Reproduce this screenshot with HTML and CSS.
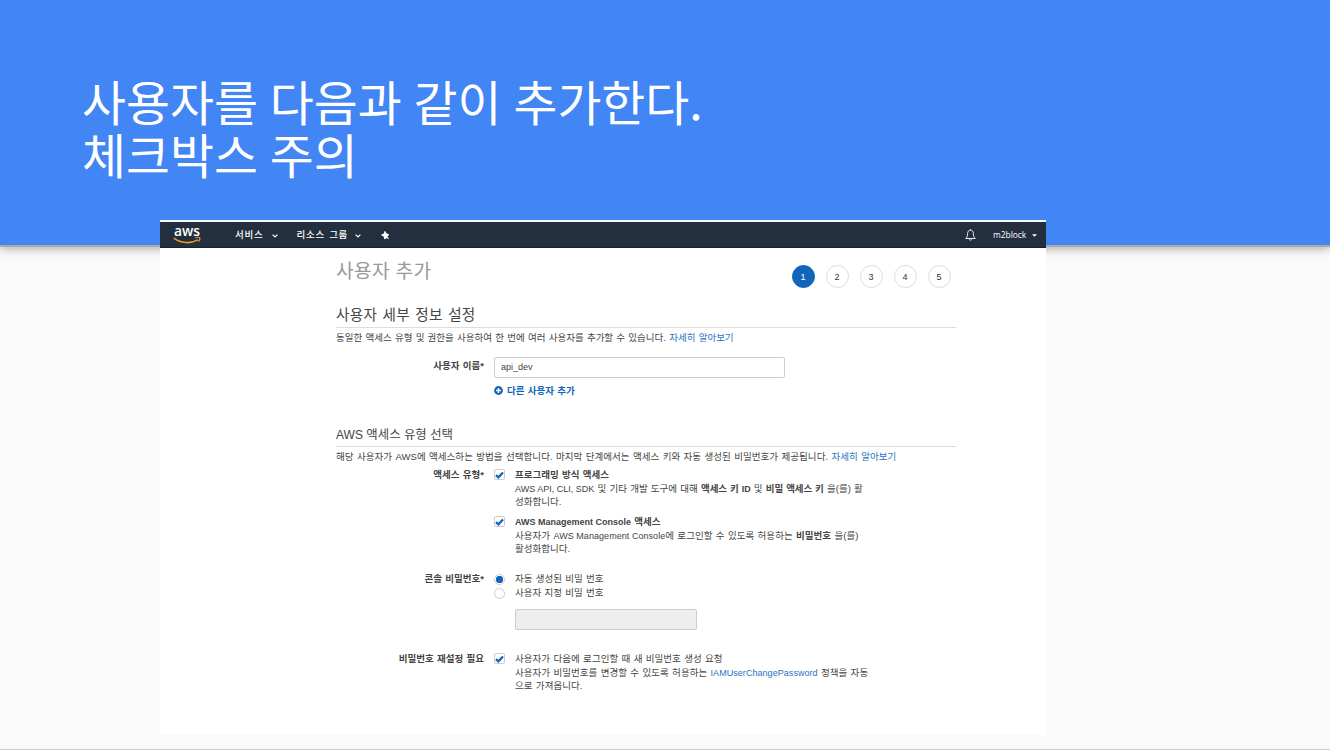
FILE: index.html
```html
<!DOCTYPE html>
<html lang="ko">
<head>
<meta charset="utf-8">
<title>사용자 추가</title>
<link rel="stylesheet" href="styles.css">
</head>
<body>
<div class="slide">
  <header class="banner">
    <h1 class="title">사용자를 다음과 같이 추가한다.<br>체크박스 주의</h1>
  </header>
  <main class="console">
    <nav class="nav">
      <svg class="logo" width="30" height="20" viewBox="0 0 30 20">
        <text x="1" y="10.500" textLength="26" lengthAdjust="spacingAndGlyphs" class="logo-text">aws</text>
        <path d="M.8 13.200C8 18.600 17.500 18.800 24.800 14.900" fill="none" stroke="#f0962a" stroke-width="1.600"/>
        <path d="M22.300 13c1.500-.8 3.900-1 4.400-.4.400.8-.3 2.900-1.500 4.100" fill="none" stroke="#f0962a" stroke-width="1.200"/>
      </svg>
      <span class="menu services">서비스</span>
      <svg class="chev" width="6" height="4" viewBox="0 0 6 4"><path d="M.6.6 3 3 5.400.6" fill="none" stroke="#fff" stroke-width="1.200"/></svg>
      <span class="menu groups">리소스 그룹</span>
      <svg class="chev" width="6" height="4" viewBox="0 0 6 4"><path d="M.6.6 3 3 5.400.6" fill="none" stroke="#fff" stroke-width="1.200"/></svg>
      <svg class="pin" width="9" height="9" viewBox="0 0 9 9"><path d="M3.200.3 4.300.2 5.300 2.300 7.600 3.100 8 4.200 6.500 4.900 7.100 6.200 8 8.300 5.600 6.900 4.200 8.200 3.200 8.100 2.800 5.700.4 4.300.6 3.200 2.900 2.600z" fill="#fff"/></svg>
      <svg class="bell" width="11" height="12" viewBox="0 0 11 12"><path d="M5.500 1.200C3.500 1.200 2.600 2.700 2.600 4.500c0 2.700-.6 3.700-1.900 5h9.600c-1.300-1.300-1.900-2.300-1.900-5 0-1.800-.9-3.300-2.900-3.300zM5.500.2v1M4.300 10.400c.3 1.100 2.100 1.100 2.400 0" fill="none" stroke="#fff" stroke-width=".9"/></svg>
      <span class="account">m2block</span>
      <svg class="caret" width="5" height="3" viewBox="0 0 5 3"><path d="M0 .2h5L2.500 2.800z" fill="#fff"/></svg>
    </nav>
    <div class="content">
      <div class="head">
        <h2 class="page-title">사용자 추가</h2>
        <ol class="steps">
          <li class="step active">1</li><li class="step">2</li><li class="step">3</li><li class="step">4</li><li class="step">5</li>
        </ol>
      </div>
      <h3 class="section">사용자 세부 정보 설정</h3>
      <p class="line intro">동일한 액세스 유형 및 권한을 사용하여 한 번에 여러 사용자를 추가할 수 있습니다. <a class="link">자세히 알아보기</a></p>
      <div class="name-row">
        <span class="label">사용자 이름*</span>
        <div class="name-field">
          <div class="input">api_dev</div>
          <a class="add"><svg width="9" height="9" viewBox="0 0 9 9"><circle cx="4.500" cy="4.500" r="4.400" fill="#1166bb"/><path d="M4.500 2v5M2 4.500h5" stroke="#fff" stroke-width="1.400"/></svg><span>다른 사용자 추가</span></a>
        </div>
      </div>
      <h3 class="section sub"><span class="sub-en">AWS</span> 액세스 유형 선택</h3>
      <p class="line intro2">해당 사용자가 <span class="en-wide">AWS</span>에 액세스하는 방법을 선택합니다. 마지막 단계에서는 액세스 키와 자동 생성된 비밀번호가 제공됩니다. <a class="link">자세히 알아보기</a></p>
      <div class="row">
        <span class="label">액세스 유형*</span>
        <span class="check"><svg width="9" height="8" viewBox="0 0 9 8"><path d="M1 4.200 3.400 6.300 8 1.500" fill="none" stroke="#1166bb" stroke-width="2.300"/></svg></span>
        <div class="desc"><b>프로그래밍 방식 액세스</b><br><span class="en">AWS API, CLI, SDK</span> 및 기타 개발 도구에 대해 <b class="tight">액세스 키 <span class="en">ID</span></b> 및 <b class="tight">비밀 액세스 키</b> 을(를) 활<br>성화합니다.</div>
      </div>
      <div class="row console-access">
        <span class="label"></span>
        <span class="check"><svg width="9" height="8" viewBox="0 0 9 8"><path d="M1 4.200 3.400 6.300 8 1.500" fill="none" stroke="#1166bb" stroke-width="2.300"/></svg></span>
        <div class="desc"><b><span class="en">AWS Management Console</span> 액세스</b><br><span class="wide">사용자가 <span class="en">AWS Management Console</span>에 로그인할 수 있도록 허용하는 <b>비밀번호</b> 을(를)</span><br>활성화합니다.</div>
      </div>
      <div class="row password">
        <span class="label">콘솔 비밀번호*</span>
        <span class="radios"><i class="radio on"></i><i class="radio"></i></span>
        <div class="desc">자동 생성된 비밀 번호<br>사용자 지정 비밀 번호<div class="input disabled"></div></div>
      </div>
      <div class="row reset">
        <span class="label">비밀번호 재설정 필요</span>
        <span class="check"><svg width="9" height="8" viewBox="0 0 9 8"><path d="M1 4.200 3.400 6.300 8 1.500" fill="none" stroke="#1166bb" stroke-width="2.300"/></svg></span>
        <div class="desc wide">사용자가 다음에 로그인할 때 새 비밀번호 생성 요청<br>사용자가 비밀번호를 변경할 수 있도록 허용하는 <a class="link en">IAMUserChangePassword</a> 정책을 자동<br>으로 가져옵니다.</div>
      </div>
    </div>
  </main>
</div>
</body>
</html>
```
FILE: styles.css
```css
* { box-sizing: border-box; }
body { margin: 0; }
h1, h2, h3, p, ol { margin: 0; padding: 0; font-weight: 400; }
.slide {
  width: 1330px; height: 750px; overflow: hidden;
  background: #fafafa; border-bottom: 1px solid #ccc;
  font-family: "Liberation Sans", "Noto Sans CJK KR", sans-serif;
}
.banner {
  height: 245px; padding: 74px 0 0 82px; background: #4285f4;
  box-shadow: 0 2px 0 #a9a9a9, 0 4px 9px rgba(0, 0, 0, .3);
}
.title {
  font: 400 47.8px/53px "Noto Sans CJK KR", sans-serif;
  color: #fff; white-space: nowrap; word-spacing: -1.5px;
}
.console {
  position: relative; width: 885.5px; height: 514.5px; margin: -25px 0 0 160px;
  padding-top: 2px; background: #fff;
}
.nav {
  display: flex; align-items: center; height: 26px; padding: 0 9px 0 13px;
  background: #232f3e; color: #fff; border-bottom: 1px solid #18212c;
}
.logo { margin-top: 1px; overflow: visible; }
.logo-text { font: 600 15px "Open Sans", sans-serif; fill: #fff; }
.menu { font: 500 9.5px/20px "Noto Sans CJK KR", sans-serif; letter-spacing: .7px; white-space: nowrap; margin-top: -1px; }
.services { margin-left: 32px; width: 37px; }
.groups { margin-left: 18.5px; width: 58.5px; word-spacing: 1px; }
.chev { margin-top: 2px; }
.pin { margin-left: 20px; margin-top: 1px; }
.bell { margin-left: auto; margin-right: 17px; }
.account { font: 8.4px/20px "Open Sans", sans-serif; width: 38.5px; }
.caret { margin-top: 1px; }
.content {
  width: 796px; padding-left: 176px; color: #444;
}
.head { display: flex; justify-content: space-between; height: 52px; }
.page-title { font-size: 19.2px; line-height: 28px; margin-top: 10px; color: #999; white-space: nowrap; letter-spacing: .3px; }
.steps { display: flex; gap: 11px; list-style: none; margin: 17px 5.5px 0 0; }
.step {
  width: 23px; height: 23px; border: 1px solid #ddd; border-radius: 50%;
  font-size: 9px; line-height: 22px; text-align: center; color: #333;
}
.step.active { background: #1166bb; border-color: #1166bb; color: #fff; }
.section {
  height: 28px; border-bottom: 1px solid #ddd;
  font-size: 14.6px; line-height: 31px; word-spacing: 1px; letter-spacing: .3px; white-space: nowrap;
}
.line { height: 19px; font-size: 9.5px; line-height: 20px; word-spacing: .6px; white-space: nowrap; }
.link { color: #1f73c4; }
.name-row { display: flex; gap: 10px; margin-top: 10px; }
.label {
  flex: none; width: 148px; text-align: right;
  font-size: 9.5px; line-height: 14px; font-weight: 700; word-spacing: .6px;
}
.name-row .label { margin-top: 2px; }
.input {
  width: 291px; height: 21px; padding-left: 6px; border: 1px solid #ccc; border-radius: 2px;
  font-size: 9px; line-height: 19px;
}
.add {
  display: flex; align-items: center; gap: 4px; margin-top: 6px;
  font-size: 9.5px; line-height: 14px; font-weight: 700; word-spacing: .6px; color: #1166bb;
}
.add svg { margin-top: -1px; }
.sub { height: 26px; margin-top: 23px; font-size: 12.4px; line-height: 28px; word-spacing: 0; letter-spacing: 0; }
.sub-en { font-size: 12px; }
.intro2 { height: 21px; line-height: 19px; letter-spacing: .06px; }
.en { font-size: 9px; line-height: 0; word-spacing: 0; }
.en-wide { font-size: 9.5px; line-height: 0; }
.row {
  display: flex; gap: 10px; height: 40.5px;
  font-size: 9.5px; line-height: 13.5px; word-spacing: .6px;
}
.check {
  flex: none; display: flex; align-items: center; justify-content: center;
  width: 11px; height: 11px; margin-top: 1px; border: 1px solid #ccc; border-radius: 2px;
}
.check svg { flex: none; }
.desc { white-space: nowrap; }
.tight { letter-spacing: -.12px; }
.wide { letter-spacing: .05px; }
.console-access { margin-top: 6.500px; }
.password { margin-top: 16.500px; height: 57px; }
.radios { flex: none; width: 11px; padding-top: 2px; }
.radio {
  display: block; width: 11px; height: 11px; margin-bottom: 2.500px;
  border: 1px solid #ccc; border-radius: 50%;
}
.radio.on { background: radial-gradient(circle, #1166bb 3.400px, #fff 4px); }
.disabled { width: 182px; margin-top: 10px; background: #eee; }
.reset { margin-top: 23px; }
```
